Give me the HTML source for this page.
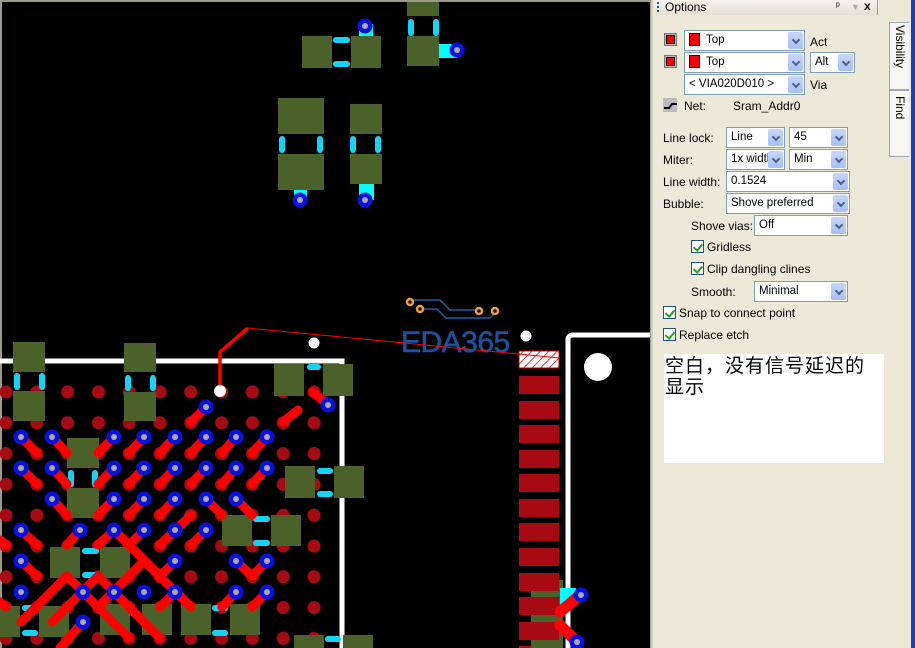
<!DOCTYPE html>
<html><head><meta charset="utf-8"><style>
*{margin:0;padding:0;box-sizing:border-box}
body{width:915px;height:648px;overflow:hidden;background:#ece9d8;position:relative;font-family:Tahoma,"Liberation Sans",sans-serif;font-size:11px;color:#000}
#pcb{position:absolute;left:0;top:0;width:650px;height:648px;background:#000;border-top:2px solid #9d9a8c;border-left:2px solid #9d9a8c}
.a{position:absolute;white-space:nowrap}
.dd{position:absolute;background:#fff;border:1px solid #7f9db9;height:21px;padding:0 4px;line-height:19px;font-size:11.5px}
.dd:after{content:"";position:absolute;right:1px;top:1px;width:15px;height:17px;background:linear-gradient(#c6d6fc,#a8bff7);border-radius:2px}
.dd i{position:absolute;right:5px;top:6px;width:6px;height:6px;border-right:2px solid #4d6185;border-bottom:2px solid #4d6185;transform:rotate(45deg);z-index:1}
.sw{display:inline-block;width:11px;height:13px;background:#f00;border:1px solid #000;vertical-align:-3px;margin-right:6px}
.cb{position:absolute;width:13px;height:13px;border:1px solid #1c5180;background:#fff}
.cb:after{content:"";position:absolute;left:3px;top:1px;width:4px;height:7px;border-right:2px solid #21a121;border-bottom:2px solid #21a121;transform:rotate(40deg)}
</style></head><body>
<div id="pcb"></div>
<svg style="position:absolute;left:0;top:0" width="650" height="648">
<defs>
<pattern id="dots" x="-9" y="377" width="30.8" height="30.8" patternUnits="userSpaceOnUse"><circle cx="15" cy="15" r="6.5" fill="#a80a14"/></pattern>
<pattern id="hatch" width="6" height="6" patternUnits="userSpaceOnUse" patternTransform="rotate(45)"><rect width="6" height="6" fill="#fff"/><line x1="0" y1="0" x2="0" y2="6" stroke="#c00" stroke-width="1.5"/></pattern>
<g id="v"><circle r="7.5" fill="#0a10e0"/><circle r="3" fill="#aaa"/></g>
</defs>
<g fill="#4a6229">
<rect x="302" y="36" width="30" height="32"/><rect x="351" y="36" width="30" height="32"/>
<rect x="407" y="2" width="32" height="14"/><rect x="407" y="36" width="32" height="30"/>
<rect x="278" y="98" width="46" height="36"/><rect x="278" y="154" width="46" height="36"/>
<rect x="350" y="104" width="32" height="30"/><rect x="350" y="154" width="32" height="30"/>
</g>
<g fill="#12d4f5">
<rect x="333" y="37" width="17" height="6" rx="3"/><rect x="333" y="61" width="17" height="6" rx="3"/>
<rect x="408" y="19" width="6" height="17" rx="3"/><rect x="433" y="19" width="6" height="17" rx="3"/>
<rect x="279" y="136" width="6" height="17" rx="3"/><rect x="317" y="136" width="6" height="17" rx="3"/>
<rect x="350" y="136" width="6" height="17" rx="3"/><rect x="375" y="136" width="6" height="17" rx="3"/>
</g>
<g fill="#0ff"><rect x="359" y="24" width="14" height="12"/><rect x="439" y="44" width="18" height="14"/><rect x="294" y="190" width="13" height="10"/><rect x="359" y="184" width="15" height="16"/></g>
<use href="#v" x="365" y="26"/><use href="#v" x="457" y="50"/><use href="#v" x="300" y="200"/><use href="#v" x="365" y="200"/>
<g fill="none" stroke="#1e5aa8" stroke-width="1.5"><path d="M413 300H440L450 310H480"/><path d="M420 309H437L446 318H490L496 312"/></g>
<g fill="#0d0d0d" stroke="#f0a030" stroke-width="2.5"><circle cx="410" cy="302" r="3"/><circle cx="420" cy="309" r="3"/><circle cx="479" cy="311" r="3"/><circle cx="495" cy="311" r="3"/></g>
<text x="401" y="352" font-family="Liberation Sans,sans-serif" font-size="30" fill="#1a52a0" stroke="#1a52a0" stroke-width="0.6" letter-spacing="-0.5">EDA365</text>
<circle cx="526" cy="336" r="5.5" fill="#fff"/><circle cx="314" cy="343" r="5.5" fill="#fff"/>
<path d="M0 361H342V648" fill="none" stroke="#fff" stroke-width="5"/>
<path d="M568 648V340Q568 335 573 335H650" fill="none" stroke="#fff" stroke-width="5"/>
<circle cx="598" cy="367" r="14" fill="#fff"/>
<rect x="519" y="351" width="40" height="17" fill="url(#hatch)" stroke="#c00"/>
<g fill="#a80a14">
<rect x="519" y="376" width="40" height="18"/><rect x="519" y="401" width="40" height="18"/><rect x="519" y="425" width="40" height="18"/><rect x="519" y="450" width="40" height="18"/><rect x="519" y="474" width="40" height="18"/><rect x="519" y="499" width="40" height="18"/><rect x="519" y="523" width="40" height="18"/><rect x="519" y="548" width="40" height="18"/><rect x="519" y="573" width="40" height="18"/><rect x="519" y="597" width="40" height="18"/><rect x="519" y="622" width="40" height="18"/><rect x="519" y="646" width="40" height="18"/>
</g>
<rect x="531" y="580" width="32" height="68" fill="#4a6229"/>
<rect x="519" y="573" width="40" height="18" fill="#a80a14"/><rect x="519" y="597" width="40" height="18" fill="#a80a14"/><rect x="519" y="622" width="40" height="18" fill="#a80a14"/>
<rect x="560" y="588" width="16" height="18" fill="#0ff"/>
<g stroke="#f00" stroke-width="11" stroke-linecap="round"><line x1="560" y1="612" x2="580" y2="595"/><line x1="560" y1="625" x2="577" y2="642"/></g>
<use href="#v" x="581" y="595"/><use href="#v" x="577" y="642"/>
<path d="M220 390V352L248 328" fill="none" stroke="#f00" stroke-width="3.5"/>
<line x1="248" y1="328" x2="560" y2="358" stroke="#f00" stroke-width="1"/>
<rect x="0" y="377" width="330" height="271" fill="url(#dots)"/>
<g fill="#4a6229">
<rect x="13" y="342" width="32" height="30"/><rect x="13" y="391" width="32" height="30"/>
<rect x="124" y="343" width="32" height="29"/><rect x="124" y="392" width="32" height="29"/>
<rect x="67" y="438" width="32" height="30"/><rect x="67" y="488" width="32" height="30"/>
<rect x="274" y="364" width="30" height="32"/><rect x="323" y="364" width="30" height="32"/>
<rect x="285" y="466" width="30" height="32"/><rect x="334" y="466" width="30" height="32"/>
<rect x="222" y="515" width="30" height="31"/><rect x="271" y="515" width="30" height="31"/>
<rect x="50" y="547" width="30" height="31"/><rect x="100" y="547" width="30" height="31"/>
<rect x="0" y="606" width="20" height="31"/><rect x="39" y="606" width="30" height="31"/><rect x="100" y="604" width="30" height="31"/>
<rect x="142" y="604" width="30" height="31"/><rect x="181" y="604" width="30" height="31"/><rect x="230" y="604" width="30" height="31"/>
<rect x="294" y="635" width="30" height="13"/><rect x="343" y="635" width="30" height="13"/>
</g>
<g fill="#12d4f5">
<rect x="14" y="373" width="6" height="17" rx="3"/><rect x="39" y="373" width="6" height="17" rx="3"/>
<rect x="125" y="375" width="6" height="16" rx="3"/><rect x="150" y="375" width="6" height="16" rx="3"/>
<rect x="68" y="470" width="6" height="17" rx="3"/><rect x="92" y="470" width="6" height="17" rx="3"/>
<rect x="307" y="364" width="14" height="6" rx="3"/>
<rect x="317" y="468" width="16" height="6" rx="3"/><rect x="317" y="491" width="16" height="6" rx="3"/>
<rect x="253" y="516" width="17" height="6" rx="3"/><rect x="253" y="540" width="17" height="6" rx="3"/>
<rect x="82" y="548" width="17" height="6" rx="3"/><rect x="82" y="572" width="17" height="6" rx="3"/>
<rect x="22" y="605" width="16" height="6" rx="3"/><rect x="22" y="630" width="16" height="6" rx="3"/>
<rect x="212" y="605" width="16" height="6" rx="3"/><rect x="212" y="630" width="16" height="6" rx="3"/>
<rect x="325" y="636" width="16" height="6" rx="3"/>
</g>
<circle cx="220" cy="391" r="6" fill="#fff"/>
<g stroke="#f00" stroke-width="9" stroke-linecap="round">
<line x1="206" y1="407" x2="191" y2="422"/><line x1="298" y1="410" x2="283" y2="422"/><line x1="328" y1="405" x2="313" y2="392"/>
<line x1="21" y1="437" x2="37" y2="453"/><line x1="52" y1="437" x2="67" y2="453"/><line x1="114" y1="437" x2="98" y2="453"/><line x1="144" y1="437" x2="129" y2="453"/><line x1="175" y1="437" x2="160" y2="453"/><line x1="206" y1="437" x2="191" y2="453"/><line x1="236" y1="437" x2="222" y2="453"/><line x1="267" y1="437" x2="252" y2="453"/>
<line x1="21" y1="468" x2="37" y2="484"/><line x1="52" y1="468" x2="67" y2="484"/><line x1="114" y1="468" x2="98" y2="484"/><line x1="144" y1="468" x2="129" y2="484"/><line x1="175" y1="468" x2="160" y2="484"/><line x1="206" y1="468" x2="191" y2="484"/><line x1="236" y1="468" x2="222" y2="484"/><line x1="267" y1="468" x2="252" y2="484"/>
<line x1="52" y1="499" x2="67" y2="515"/><line x1="114" y1="499" x2="98" y2="515"/><line x1="144" y1="499" x2="129" y2="515"/><line x1="175" y1="499" x2="160" y2="515"/><line x1="206" y1="499" x2="222" y2="515"/><line x1="236" y1="499" x2="252" y2="515"/>
<line x1="191" y1="515" x2="160" y2="545"/>
<line x1="21" y1="530" x2="37" y2="545"/><line x1="80" y1="530" x2="67" y2="545"/><line x1="114" y1="530" x2="98" y2="545"/><line x1="114" y1="530" x2="160" y2="576"/><line x1="144" y1="530" x2="129" y2="545"/><line x1="175" y1="530" x2="160" y2="545"/><line x1="206" y1="530" x2="191" y2="545"/>
<line x1="236" y1="561" x2="252" y2="576"/><line x1="267" y1="561" x2="252" y2="576"/><line x1="21" y1="561" x2="37" y2="576"/><line x1="175" y1="561" x2="160" y2="576"/>
<line x1="67" y1="576" x2="21" y2="622"/><line x1="98" y1="576" x2="52" y2="622"/><line x1="67" y1="576" x2="129" y2="638"/><line x1="98" y1="576" x2="160" y2="638"/>
<line x1="144" y1="561" x2="98" y2="607"/><line x1="144" y1="561" x2="191" y2="607"/><line x1="114" y1="592" x2="98" y2="607"/><line x1="175" y1="592" x2="160" y2="607"/>
<line x1="83" y1="622" x2="60" y2="648"/><line x1="236" y1="592" x2="222" y2="607"/><line x1="267" y1="592" x2="252" y2="607"/>
<line x1="0" y1="540" x2="6" y2="545"/><line x1="0" y1="602" x2="6" y2="607"/>
</g>
<g>
<use href="#v" x="206" y="407"/><use href="#v" x="328" y="405"/>
<use href="#v" x="21" y="437"/><use href="#v" x="52" y="437"/><use href="#v" x="114" y="437"/><use href="#v" x="144" y="437"/><use href="#v" x="175" y="437"/><use href="#v" x="206" y="437"/><use href="#v" x="236" y="437"/><use href="#v" x="267" y="437"/>
<use href="#v" x="21" y="468"/><use href="#v" x="52" y="468"/><use href="#v" x="114" y="468"/><use href="#v" x="144" y="468"/><use href="#v" x="175" y="468"/><use href="#v" x="206" y="468"/><use href="#v" x="236" y="468"/><use href="#v" x="267" y="468"/>
<use href="#v" x="52" y="499"/><use href="#v" x="114" y="499"/><use href="#v" x="144" y="499"/><use href="#v" x="175" y="499"/><use href="#v" x="206" y="499"/><use href="#v" x="236" y="499"/>
<use href="#v" x="21" y="530"/><use href="#v" x="80" y="530"/><use href="#v" x="114" y="530"/><use href="#v" x="144" y="530"/><use href="#v" x="175" y="530"/><use href="#v" x="206" y="530"/>
<use href="#v" x="21" y="561"/><use href="#v" x="175" y="561"/><use href="#v" x="236" y="561"/><use href="#v" x="267" y="561"/>
<use href="#v" x="21" y="592"/><use href="#v" x="83" y="592"/><use href="#v" x="114" y="592"/><use href="#v" x="144" y="592"/><use href="#v" x="175" y="592"/><use href="#v" x="236" y="592"/><use href="#v" x="267" y="592"/>
<use href="#v" x="83" y="622"/>
</g>
</svg>
<div class="a" style="left:650px;top:0;width:3px;height:648px;background:#d4d0c8;border-left:1px solid #9d9a8c"></div>
<div class="a" style="left:655px;top:0;width:223px;height:15px;background:linear-gradient(#f5f4ee,#e3e0d3);border-right:1px solid #9d9a8c;font-size:12px;padding-left:10px;line-height:14px">Options
<span style="position:absolute;left:2px;top:2px;width:2px;height:10px;border-left:2px dotted #2a55c8"></span>
<span style="position:absolute;left:181px;top:0;font-size:10px">ᵖ</span><span style="position:absolute;left:196px;top:0;color:#aaa;font-size:9px">▼</span><span style="position:absolute;left:209px;top:-1px;font-weight:bold">x</span></div>
<div class="a" style="left:911px;top:0;width:4px;height:648px;background:#1a3ecc"></div>
<div class="a" style="left:889px;top:22px;width:20px;height:68px;background:#f7f6f1;border:1px solid #9aa5b5;border-right:none"></div>
<div class="a" style="left:889px;top:90px;width:20px;height:67px;background:#f7f6f1;border:1px solid #9aa5b5;border-right:none"></div>
<div class="a" style="left:907px;top:25px;transform:rotate(90deg);transform-origin:0 0;font-size:12px">Visibility</div>
<div class="a" style="left:907px;top:96px;transform:rotate(90deg);transform-origin:0 0;font-size:12px">Find</div>

<div class="a" style="left:664px;top:33px;width:13px;height:13px;border:1px solid #777;background:#bbb;padding:1px"><div style="width:9px;height:9px;background:#f00;border:1px solid #000"></div></div>
<div class="a" style="left:664px;top:55px;width:13px;height:13px;border:1px solid #777;background:#bbb;padding:1px"><div style="width:9px;height:9px;background:#f00;border:1px solid #000"></div></div>
<div class="dd" style="left:684px;top:30px;width:121px"><span class="sw"></span>Top<i></i></div>
<div class="dd" style="left:684px;top:52px;width:121px"><span class="sw"></span>Top<i></i></div>
<div class="dd" style="left:684px;top:74px;width:121px">&lt; VIA020D010 &gt;<i></i></div>
<div class="a" style="left:810px;top:35px;font-size:12px">Act</div>
<div class="dd" style="left:810px;top:52px;width:45px">Alt<i></i></div>
<div class="a" style="left:810px;top:78px;font-size:12px">Via</div>
<div class="a" style="left:663px;top:98px;width:14px;height:14px;background:#bbb"><svg width="14" height="14"><path d="M1 10H6L9 6H14" stroke="#000" stroke-width="2" fill="none"/></svg></div>
<div class="a" style="left:684px;top:99px;font-size:12px">Net:</div>
<div class="a" style="left:733px;top:99px;font-size:12px">Sram_Addr0</div>
<div class="a" style="left:663px;top:131px;font-size:12px">Line lock:</div>
<div class="dd" style="left:726px;top:127px;width:59px">Line<i></i></div>
<div class="dd" style="left:789px;top:127px;width:59px">45<i></i></div>
<div class="a" style="left:663px;top:153px;font-size:12px">Miter:</div>
<div class="dd" style="left:726px;top:149px;width:59px">1x width<i></i></div>
<div class="dd" style="left:789px;top:149px;width:59px">Min<i></i></div>
<div class="a" style="left:663px;top:175px;font-size:12px">Line width:</div>
<div class="dd" style="left:726px;top:171px;width:124px">0.1524<i></i></div>
<div class="a" style="left:663px;top:197px;font-size:12px">Bubble:</div>
<div class="dd" style="left:726px;top:193px;width:124px">Shove preferred<i></i></div>
<div class="a" style="left:691px;top:219px;font-size:12px">Shove vias:</div>
<div class="dd" style="left:754px;top:215px;width:94px">Off<i></i></div>
<div class="cb" style="left:691px;top:240px"></div><div class="a" style="left:707px;top:240px;font-size:12px">Gridless</div>
<div class="cb" style="left:691px;top:262px"></div><div class="a" style="left:707px;top:262px;font-size:12px">Clip dangling clines</div>
<div class="a" style="left:691px;top:285px;font-size:12px">Smooth:</div>
<div class="dd" style="left:754px;top:281px;width:94px">Minimal<i></i></div>
<div class="cb" style="left:663px;top:306px"></div><div class="a" style="left:679px;top:306px;font-size:12px">Snap to connect point</div>
<div class="cb" style="left:663px;top:328px"></div><div class="a" style="left:679px;top:328px;font-size:12px">Replace etch</div>
<div class="a" style="left:664px;top:354px;width:220px;height:109px;background:#fff;white-space:normal;font-family:'WenQuanYi Zen Hei','Noto Sans CJK SC',sans-serif;font-size:19px;line-height:21px;letter-spacing:1px;padding-left:1px">空白，没有信号延迟的显示</div>
</body></html>
